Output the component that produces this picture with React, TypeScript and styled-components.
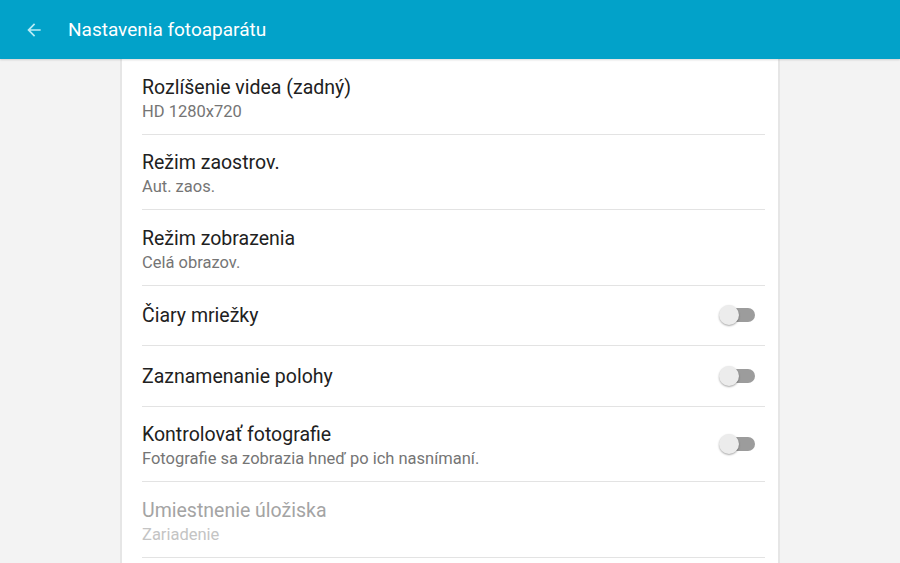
import React from 'react'
import styled, { createGlobalStyle } from 'styled-components'

const GlobalStyle = createGlobalStyle`
  *, *::before, *::after { box-sizing: border-box; }
  html, body {
    margin: 0;
    padding: 0;
    background: #f3f3f3;
    font-family: Roboto, "Noto Sans", sans-serif;
    overflow: hidden;
  }
`

const Page = styled.div`
  height: 563px;
  display: flex;
  flex-direction: column;
`

const Toolbar = styled.header`
  height: 59px;
  flex: none;
  background: #02a2c9;
  display: flex;
  align-items: center;
  padding-left: 24px;
  gap: 24px;
  box-shadow: 0 1px 2px rgba(0, 0, 0, 0.15);
  position: relative;
  z-index: 1;
`

const Title = styled.h1`
  margin: 0;
  color: #ffffff;
  font-size: 19px;
  font-weight: 400;
`

const Panel = styled.main`
  width: 660px;
  margin: 0 auto;
  flex: 1;
  background: #ffffff;
  border-left: 2px solid #e6e6e6;
  border-right: 2px solid #e6e6e6;
  padding: 0 13px 0 20px;
`

const Row = styled.div<{ $tall?: boolean }>`
  height: ${p => (p.$tall ? 75.5 : 60.5)}px;
  border-bottom: 1px solid #e3e3e3;
  display: flex;
  align-items: center;
  justify-content: space-between;
  padding-right: 10px;
`

const Texts = styled.div<{ $tall?: boolean }>`
  display: flex;
  flex-direction: column;
  gap: 3px;
  margin-top: ${p => (p.$tall ? 4 : 1)}px;
`

const Label = styled.div<{ $disabled?: boolean }>`
  font-size: 19.5px;
  line-height: 23px;
  color: ${p => (p.$disabled ? '#a4a4a4' : '#212121')};
`

const Sub = styled.div<{ $disabled?: boolean }>`
  font-size: 16.5px;
  line-height: 19px;
  color: ${p => (p.$disabled ? '#c4c4c4' : '#757575')};
`

const Switch = styled.div`
  width: 36px;
  height: 22px;
  position: relative;
  display: flex;
  align-items: center;
  justify-content: flex-end;
`

const Track = styled.div`
  width: 30px;
  height: 14px;
  border-radius: 7px;
  background: #9c9c9c;
`

const Thumb = styled.div`
  position: absolute;
  left: 0;
  top: 1px;
  width: 20px;
  height: 20px;
  border-radius: 50%;
  background: #ececec;
  box-shadow: 0 1px 2px rgba(0, 0, 0, 0.35);
`

const BackArrow = () => (
  <svg width="20" height="20" viewBox="0 0 24 24">
    <path d="M20 11H7.83l5.59-5.59L12 4l-8 8 8 8 1.41-1.41L7.83 13H20v-2z" fill="#b9ecf5" />
  </svg>
)

type Item = { label: string; sub?: string; toggle?: boolean; disabled?: boolean }

const items: Item[] = [
  { label: 'Rozlíšenie videa (zadný)', sub: 'HD 1280x720' },
  { label: 'Režim zaostrov.', sub: 'Aut. zaos.' },
  { label: 'Režim zobrazenia', sub: 'Celá obrazov.' },
  { label: 'Čiary mriežky', toggle: true },
  { label: 'Zaznamenanie polohy', toggle: true },
  { label: 'Kontrolovať fotografie', sub: 'Fotografie sa zobrazia hneď po ich nasnímaní.', toggle: true },
  { label: 'Umiestnenie úložiska', sub: 'Zariadenie', disabled: true },
]

export default function App() {
  return (
    <Page>
      <GlobalStyle />
      <Toolbar>
        <BackArrow />
        <Title>Nastavenia fotoaparátu</Title>
      </Toolbar>
      <Panel>
        {items.map(it => (
          <Row key={it.label} $tall={!!it.sub}>
            <Texts $tall={!!it.sub}>
              <Label $disabled={it.disabled}>{it.label}</Label>
              {it.sub && <Sub $disabled={it.disabled}>{it.sub}</Sub>}
            </Texts>
            {it.toggle && (
              <Switch>
                <Track />
                <Thumb />
              </Switch>
            )}
          </Row>
        ))}
      </Panel>
    </Page>
  )
}
